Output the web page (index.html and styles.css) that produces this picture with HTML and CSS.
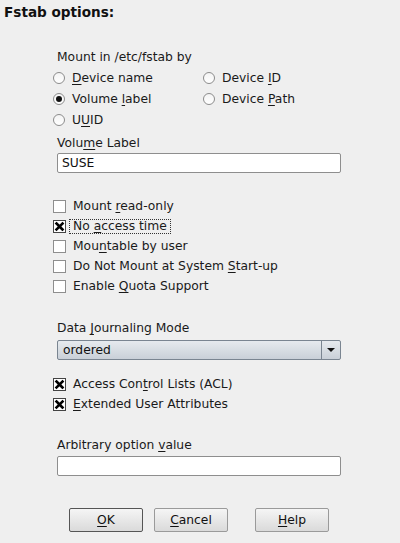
FILE: index.html
```html
<!DOCTYPE html>
<html>
<head>
<meta charset="utf-8">
<link rel="stylesheet" href="styles.css">
</head>
<body>
<div class="page">
  <div class="title">Fstab options:</div>
  <div class="content">
    <div class="label">Mount in /etc/fstab by</div>
    <div class="radios">
      <div class="row"><span class="radio"></span><span><u>D</u>evice name</span></div>
      <div class="row"><span class="radio"></span><span>Device <u>I</u>D</span></div>
      <div class="row"><span class="radio on"></span><span>Volume <u>l</u>abel</span></div>
      <div class="row"><span class="radio"></span><span>Device <u>P</u>ath</span></div>
      <div class="row"><span class="radio"></span><span>U<u>U</u>ID</span></div>
    </div>
    <div class="label gap-s">Volu<u>m</u>e Label</div>
    <div class="input">SUSE</div>

    <div class="checks first">
      <div class="row"><span class="check"></span><span>Mount <u>r</u>ead-only</span></div>
      <div class="row"><span class="check on"><svg viewBox="0 0 11 11" width="11" height="11"><path d="M2.5 2.5 L8.5 8.5 M8.5 2.5 L2.5 8.5" stroke="#000" stroke-width="2.6" stroke-linecap="square"/></svg></span><span class="focus">No <u>a</u>ccess time</span></div>
      <div class="row"><span class="check"></span><span>Mou<u>n</u>table by user</span></div>
      <div class="row"><span class="check"></span><span>Do Not Mount at System <u>S</u>tart-up</span></div>
      <div class="row"><span class="check"></span><span>Enable <u>Q</u>uota Support</span></div>
    </div>

    <div class="label gap-l">Data <u>J</u>ournaling Mode</div>
    <div class="combo"><span class="combo-text">ordered</span><span class="combo-btn"><span class="arrow"></span></span></div>

    <div class="checks second">
      <div class="row"><span class="check on"><svg viewBox="0 0 11 11" width="11" height="11"><path d="M2.5 2.5 L8.5 8.5 M8.5 2.5 L2.5 8.5" stroke="#000" stroke-width="2.6" stroke-linecap="square"/></svg></span><span>Access Con<u>t</u>rol Lists (ACL)</span></div>
      <div class="row"><span class="check on"><svg viewBox="0 0 11 11" width="11" height="11"><path d="M2.5 2.5 L8.5 8.5 M8.5 2.5 L2.5 8.5" stroke="#000" stroke-width="2.6" stroke-linecap="square"/></svg></span><span><u>E</u>xtended User Attributes</span></div>
    </div>

    <div class="label gap-a">Arbitrary option <u>v</u>alue</div>
    <div class="input input-b"></div>
  </div>
  <div class="buttons">
    <div class="btn default"><u>O</u>K</div>
    <div class="btn"><u>C</u>ancel</div>
    <div class="btn help"><u>H</u>elp</div>
  </div>
</div>
</body>
</html>
```

FILE: styles.css
```css
html, body {
  margin: 0;
  padding: 0;
  background: #efefef;
}
body {
  width: 400px;
  height: 543px;
  overflow: hidden;
  font-family: "DejaVu Sans", sans-serif;
  font-size: 12.3px;
  color: #1a1a1a;
}
u {
  text-decoration: underline;
  text-underline-offset: 2px;
}
.title {
  font-weight: bold;
  font-size: 13.6px;
  line-height: 18px;
  padding: 3px 0 0 4px;
  color: #111;
}
.content {
  margin: 26px 0 0 53px;
  width: 288px;
}
.label {
  line-height: 20px;
  height: 20px;
  padding-left: 4px;
}
.radios {
  display: grid;
  grid-template-columns: 150px auto;
}
.row {
  display: flex;
  align-items: center;
  height: 21px;
  white-space: nowrap;
}
.radio {
  width: 10px;
  height: 10px;
  border: 1px solid #8c8c8c;
  border-radius: 50%;
  background: linear-gradient(#f4f4f4, #ffffff);
  margin-right: 7px;
  position: relative;
  flex: none;
}
.radio.on::after {
  content: "";
  position: absolute;
  left: 2px;
  top: 2px;
  width: 6px;
  height: 6px;
  border-radius: 50%;
  background: #111;
}
.gap-s { margin-top: 3px; }
.input {
  margin-left: 4px;
  height: 18px;
  line-height: 18px;
  border: 1px solid #8e8e8e;
  border-radius: 2px;
  background: #fff;
  padding-left: 4px;
  color: #111;
}
.checks.first { margin-top: 23px; }
.checks .row { height: 20px; }
.check {
  width: 11px;
  height: 11px;
  border: 1px solid #8e8e8e;
  background: #fff;
  margin-right: 7px;
  flex: none;
  display: flex;
}
.check.on {
  border-color: #444;
}
.focus {
  border: 1px dotted #333;
  padding: 0 3px 0 3px;
  margin-left: -4px;
  line-height: 13px;
}
.gap-l { margin-top: 22px; }
.combo {
  margin: 2px 0 0 4px;
  height: 18px;
  border: 1px solid #7a8591;
  border-radius: 2px;
  background: linear-gradient(#e6eaee, #c9d0d8);
  display: flex;
  align-items: center;
}
.combo-text {
  flex: 1;
  padding-left: 5px;
  color: #111;
}
.combo-btn {
  width: 18px;
  height: 18px;
  border-left: 1px solid #7a8591;
  display: flex;
  align-items: center;
  justify-content: center;
}
.arrow {
  width: 0;
  height: 0;
  border-left: 4px solid transparent;
  border-right: 4px solid transparent;
  border-top: 4px solid #111;
}
.checks.second { margin-top: 14px; }
.gap-a { margin-top: 21px; }
.input-b { margin-top: 1px; }
.buttons {
  display: flex;
  margin: 32px 0 0 69px;
}
.btn {
  width: 72px;
  height: 22px;
  line-height: 22px;
  text-align: center;
  border: 1px solid #9a9a9a;
  border-radius: 2px;
  background: linear-gradient(#f5f5f5, #dadada);
  color: #111;
  margin-right: 11px;
}
.btn.default { border-color: #555; }
.btn.help { margin-left: 16px; }
```
